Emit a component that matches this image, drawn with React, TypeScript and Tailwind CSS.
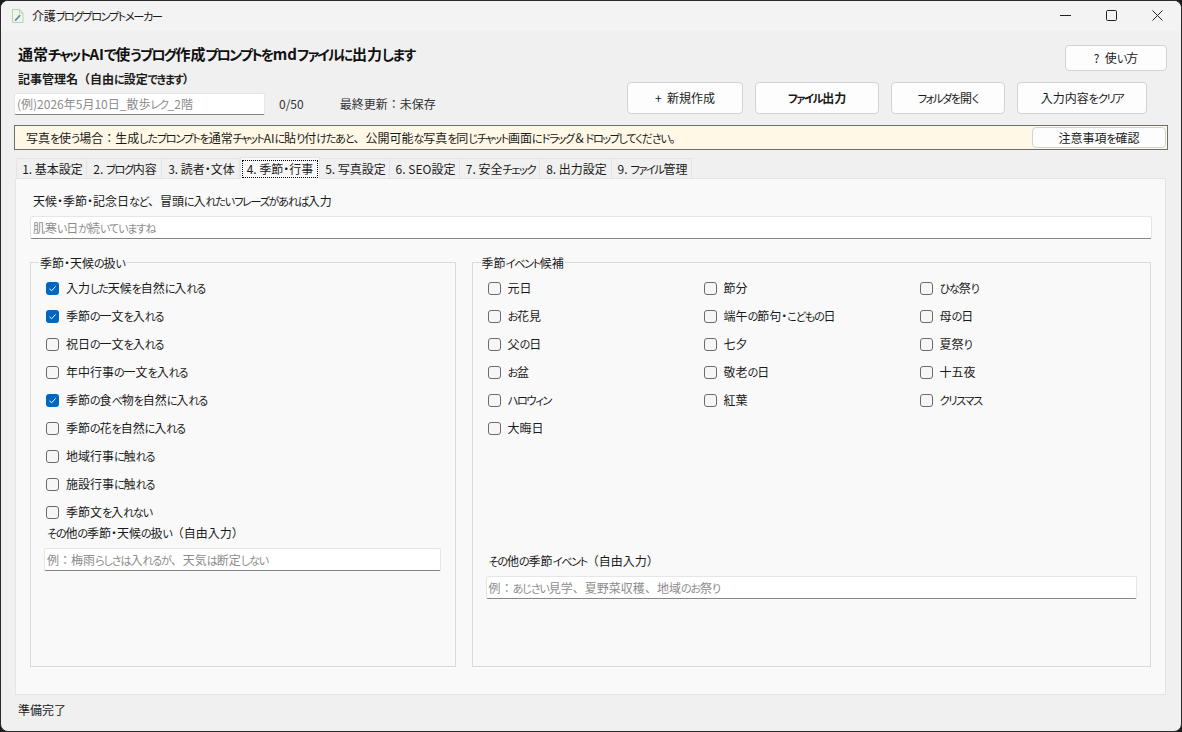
import React from "react";

const FONT = "font-['Noto_Sans_CJK_JP','Liberation_Sans',sans-serif] [font-feature-settings:'palt']";

const TABS = [
  { label: "1. 基本設定", width: "w-[71px]" },
  { label: "2. ブログ内容", width: "w-[75px]" },
  { label: "3. 読者・文体", width: "w-[78px]" },
  { label: "4. 季節・行事", width: "w-[80px]", active: true },
  { label: "5. 写真設定", width: "w-[70px]" },
  { label: "6. SEO設定", width: "w-[70px]" },
  { label: "7. 安全チェック", width: "w-[80px]" },
  { label: "8. 出力設定", width: "w-[72px]" },
  { label: "9. ファイル管理", width: "w-[80px]" },
];

const WEATHER = [
  { label: "入力した天候を自然に入れる", checked: true },
  { label: "季節の一文を入れる", checked: true },
  { label: "祝日の一文を入れる" },
  { label: "年中行事の一文を入れる" },
  { label: "季節の食べ物を自然に入れる", checked: true },
  { label: "季節の花を自然に入れる" },
  { label: "地域行事に触れる" },
  { label: "施設行事に触れる" },
  { label: "季節文を入れない" },
];

const EVENTS = [
  "元日", "節分", "ひな祭り",
  "お花見", "端午の節句・こどもの日", "母の日",
  "父の日", "七夕", "夏祭り",
  "お盆", "敬老の日", "十五夜",
  "ハロウィン", "紅葉", "クリスマス",
  "大晦日",
];

// the reference font has small, narrow kana next to full size kanji
const Jp: React.FC<{ text: string }> = ({ text }) => (
  <>
    {text.split(/([ぁ-ゖ]+|[ァ-ヺー]+|[：（）＆、。]+)/).map((part, i) => {
      if (!part) return null;
      if (/^[ぁ-ゖ]/.test(part)) {
        return (
          <span key={i} className="text-[0.92em] tracking-[-0.1em]">
            {part}
          </span>
        );
      }
      if (/^[ァ-ヺー]/.test(part)) {
        return (
          <span key={i} className="text-[0.94em] tracking-[-0.13em]">
            {part}
          </span>
        );
      }
      if (/^[：（）＆、。]/.test(part)) {
        return (
          <span key={i} className="[font-feature-settings:normal]">
            {part}
          </span>
        );
      }
      return <React.Fragment key={i}>{part}</React.Fragment>;
    })}
  </>
);

const Check: React.FC<{ label: string; checked?: boolean }> = ({ label, checked }) => (
  <div className="flex h-[28px] items-center gap-[7px]">
    {checked ? (
      <span className="flex h-[13px] w-[13px] items-center justify-center rounded-[3px] bg-[#0067c0]">
        <svg width="9" height="9" viewBox="0 0 9 9" fill="none">
          <path d="M1.5 4.8 3.6 6.8 7.6 2.4" stroke="#fff" strokeWidth="1" />
        </svg>
      </span>
    ) : (
      <span className="h-[13px] w-[13px] rounded-[3px] border border-[#6b6b6b] bg-[#f6f6f6]" />
    )}
    <span className="text-[12px] leading-none text-[#1a1a1a]">
      <Jp text={label} />
    </span>
  </div>
);

const TextInput: React.FC<{ placeholder: string; className?: string }> = ({ placeholder, className }) => (
  <div
    className={`flex items-center rounded-[2px] border border-[#e6e6e6] border-b-[#858585] bg-white px-[2px] text-[12px] text-[#8c8c8c] ${className ?? ""}`}
  >
    <span>
      <Jp text={placeholder} />
    </span>
  </div>
);

const Btn: React.FC<{ label: string; className?: string }> = ({ label, className }) => (
  <button className={`rounded-[4px] border border-[#d2d2d2] bg-[#fdfdfd] text-[12px] text-[#1a1a1a] ${className ?? ""}`}>
    <Jp text={label} />
  </button>
);

const GroupBox: React.FC<{ title: string; className?: string; children: React.ReactNode }> = ({
  title,
  className,
  children,
}) => (
  <div className={`relative flex flex-col border border-[#d9d9d9] ${className ?? ""}`}>
    <span className="absolute left-[8px] top-[-8px] bg-[#f9f9f9] px-[1px] text-[12px] leading-[16px] text-[#1a1a1a]">
      <Jp text={title} />
    </span>
    {children}
  </div>
);

export default function App() {
  return (
    <div className={`h-[732px] w-[1182px] overflow-hidden bg-[#1c1c1c] ${FONT}`}>
      <div className="flex h-full flex-col overflow-hidden rounded-[8px] border border-[#2a2a2a] bg-[#f0f0f0]">
        {/* title bar */}
        <div className="flex h-[30px] shrink-0 items-center bg-[#f3f3f3]">
          <svg className="ml-[10px]" width="14" height="16" viewBox="0 0 14 16" fill="none">
            <path d="M1.5 1.5h7l3.5 3.5v9.500h-10.500z" fill="#eef5ea" stroke="#b5d6ad" />
            <path d="M8.500 1.500v3.500h3.500" stroke="#b5d6ad" />
            <path d="M4 11.500l4.500-5 1.300 1.200-4.500 5-1.700.3z" fill="#6d8ea3" />
          </svg>
          <span className="ml-[7px] text-[12px] tracking-[-0.2px] text-[#1a1a1a]">
            <Jp text="介護ブログプロンプトメーカー" />
          </span>
          <div className="mb-[1px] ml-auto flex items-center">
            <svg className="mr-[35px]" width="11" height="11" viewBox="0 0 11 11" fill="none">
              <path d="M0 5.500h11" stroke="#222" />
            </svg>
            <svg className="mr-[35px]" width="11" height="11" viewBox="0 0 11 11" fill="none">
              <rect x="0.500" y="0.500" width="10" height="10" rx="1.200" stroke="#222" />
            </svg>
            <svg className="mr-[18px]" width="11" height="11" viewBox="0 0 11 11" fill="none">
              <path d="M.5.500l10 10M10.500.500l-10 10" stroke="#222" />
            </svg>
          </div>
        </div>

        {/* header */}
        <div className="flex h-[94px] shrink-0 justify-between pl-[13px] pr-[14px]">
          <div className="flex flex-col">
            <h1 className="ml-[4px] mt-[14px] text-[15px] font-bold leading-[18px] text-[#111]">
              <Jp text="通常チャットAIで使うブログ作成プロンプトをmdファイルに出力します" />
            </h1>
            <div className="ml-[4px] mt-[8px] text-[12px] font-bold leading-[16px] text-[#1a1a1a]">
              <Jp text="記事管理名（自由に設定できます）" />
            </div>
            <div className="mt-[6px] flex items-center">
              <TextInput placeholder="(例)2026年5月10日_散歩レク_2階" className="h-[22px] w-[251px]" />
              <span className="ml-[14px] text-[12px] text-[#333]">0/50</span>
              <span className="ml-[36px] text-[12px] text-[#333]">
                <Jp text="最終更新：未保存" />
              </span>
            </div>
          </div>
          <div className="flex flex-col items-end">
            <Btn label="?  使い方" className="mt-[14px] h-[26px] w-[102px] whitespace-pre" />
            <div className="mr-[20px] mt-[11px] flex gap-[12px]">
              <Btn label="+  新規作成" className="h-[32px] w-[116px] whitespace-pre" />
              <Btn label="ファイル出力" className="h-[32px] w-[124px] font-bold" />
              <Btn label="フォルダを開く" className="h-[32px] w-[114px]" />
              <Btn label="入力内容をクリア" className="h-[32px] w-[130px]" />
            </div>
          </div>
        </div>

        {/* notice */}
        <div className="ml-[13px] mr-[13px] flex h-[25px] shrink-0 items-center justify-between border border-[#6e6e6e] bg-[#fff8e6] pl-[11px] pr-[1px]">
          <span className="text-[12px] text-[#1a1a1a]">
            <Jp text="写真を使う場合：生成したプロンプトを通常チャットAIに貼り付けたあと、公開可能な写真を同じチャット画面にドラッグ＆ドロップしてください。" />
          </span>
          <Btn label="注意事項を確認" className="h-[21px] w-[134px]" />
        </div>

        {/* tabs */}
        <div className="ml-[15px] mt-[7px] flex h-[21px] shrink-0 items-start">
          {TABS.map((t) =>
            t.active ? (
              <div
                key={t.label}
                className={`relative z-10 flex h-[22px] items-center justify-center border border-b-0 border-[#e4e4e4] bg-[#f9f9f9] text-[12px] text-[#1a1a1a] ${t.width}`}
              >
                <span className="flex h-[18px] w-[76px] items-center justify-center border border-dotted border-black">
                  <span>
                    <Jp text={t.label} />
                  </span>
                </span>
              </div>
            ) : (
              <div
                key={t.label}
                className={`mt-[1px] flex h-[20px] items-center justify-center border border-l-0 border-b-0 border-[#e4e4e4] bg-[#f0f0f0] pl-[2px] text-[12px] text-[#1a1a1a] first:border-l ${t.width}`}
              >
                <span>
                  <Jp text={t.label} />
                </span>
              </div>
            ),
          )}
        </div>

        {/* tab panel */}
        <div className="ml-[14px] mr-[15px] flex h-[517px] shrink-0 flex-col border border-[#e4e4e4] bg-[#f9f9f9] px-[14px] pt-[14px]">
          <div className="ml-[3px] text-[12px] leading-[16px] text-[#1a1a1a]">
            <Jp text="天候・季節・記念日など、冒頭に入れたいフレーズがあれば入力" />
          </div>
          <TextInput placeholder="肌寒い日が続いていますね" className="mt-[7px] h-[23px] w-[1122px]" />

          <div className="mt-[23px] flex h-[405px] gap-[16px]">
            <GroupBox title="季節・天候の扱い" className="w-[426px]">
              <div className="ml-[15px] mt-[11px] flex flex-col">
                {WEATHER.map((w) => (
                  <Check key={w.label} label={w.label} checked={w.checked} />
                ))}
              </div>
              <div className="ml-[16px] mt-[-1px] text-[12px] leading-[16px] text-[#1a1a1a]">
                <Jp text="その他の季節・天候の扱い（自由入力）" />
              </div>
              <TextInput placeholder="例：梅雨らしさは入れるが、天気は断定しない" className="ml-[13px] mt-[7px] h-[23px] w-[397px]" />
            </GroupBox>

            <GroupBox title="季節イベント候補" className="w-[680px]">
              <div className="ml-[15px] mt-[11px] grid h-[252px] grid-cols-[216px_216px_216px] content-start">
                {EVENTS.map((e) => (
                  <Check key={e} label={e} />
                ))}
              </div>
              <div className="ml-[16px] mt-[27px] text-[12px] leading-[16px] text-[#1a1a1a]">
                <Jp text="その他の季節イベント（自由入力）" />
              </div>
              <TextInput placeholder="例：あじさい見学、夏野菜収穫、地域のお祭り" className="ml-[13px] mt-[7px] h-[23px] w-[651px]" />
            </GroupBox>
          </div>
        </div>

        {/* status bar */}
        <div className="ml-[17px] mt-[7px] text-[12px] leading-[16px] text-[#1a1a1a]">準備完了</div>
      </div>
    </div>
  );
}
